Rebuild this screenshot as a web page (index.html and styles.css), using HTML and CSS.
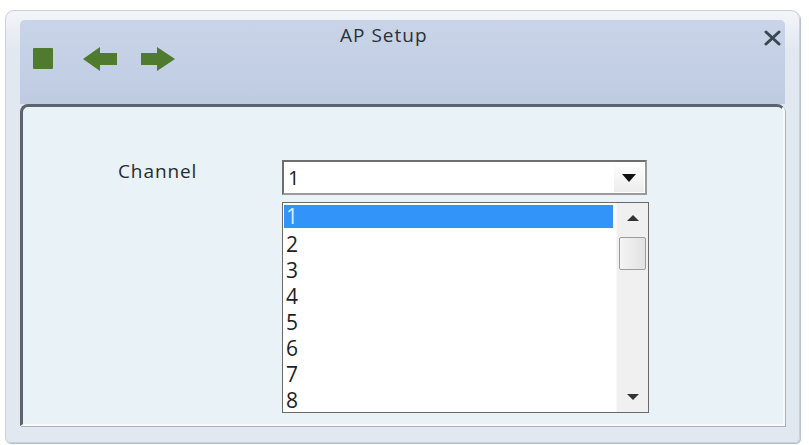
FILE: index.html
```html
<html>
  <head>
    <title>AP Setup</title>
    <link rel="stylesheet" href="styles.css">
  </head>
  <body>
    <div class="window">
      <div class="header">
        <div class="tools">
          <svg class="tool" width="20" height="21" viewBox="0 0 20 21"><rect x="0" y="0" width="20" height="21" rx="1" fill="#4f7b2f"/></svg>
          <svg class="tool" width="34" height="24" viewBox="0 0 34 24"><polygon points="0,12 17,0 17,6 34,6 34,18 17,18 17,24" fill="#4f7b2f"/></svg>
          <svg class="tool" width="34" height="24" viewBox="0 0 34 24"><polygon points="34,12 16,0 16,6 0,6 0,18 16,18 16,24" fill="#4f7b2f"/></svg>
        </div>
        <div class="title">AP Setup</div>
        <div class="close">
          <svg width="19" height="16" viewBox="0 0 19 16"><path d="M3 2 L16 14 M16 2 L3 14" stroke="#3e4550" stroke-width="3" stroke-linecap="round"/></svg>
        </div>
      </div>
      <div class="panel">
        <div class="field">
          <div class="label">Channel</div>
          <div class="picker">
            <div class="combo">
              <span class="value">1</span>
              <span class="drop"><svg width="14" height="8" viewBox="0 0 14 8"><polygon points="0,0 14,0 7,8" fill="#111"/></svg></span>
            </div>
            <div class="list">
              <ul class="options">
                <li class="selected">1</li>
                <li>2</li>
                <li>3</li>
                <li>4</li>
                <li>5</li>
                <li>6</li>
                <li>7</li>
                <li>8</li>
              </ul>
              <div class="scrollbar">
                <span class="arrow"><svg width="12" height="6" viewBox="0 0 12 6"><polygon points="0,6 12,6 6,0" fill="#333"/></svg></span>
                <span class="thumb"></span>
                <span class="track"></span>
                <span class="arrow"><svg width="12" height="6" viewBox="0 0 12 6"><polygon points="0,0 12,0 6,6" fill="#333"/></svg></span>
              </div>
            </div>
          </div>
        </div>
      </div>
    </div>
  </body>
</html>
```

FILE: styles.css
```css
body {
  margin: 0;
  background-color: #ffffff;
  font-family: "Open Sans", "Noto Sans", sans-serif;
  color: #2b2f36;
}
/* outer window frame */
.window {
  width: 765px;
  height: 406px;
  margin: 10px 0 0 5px;
  padding: 9px 14px 16px 14px;
  border: 1px solid #c9d0d9;
  border-radius: 9px 9px 5px 5px;
  background: linear-gradient(#f3f5f9, #e2e8f0 40px, #e2e8f0);
  box-shadow: 1px 1px 1px #b5bcc6;
  display: flex;
  flex-direction: column;
}
.header {
  height: 84px;
  display: flex;
  align-items: flex-start;
  padding: 0 3px 0 13px;
  background: linear-gradient(#c9d4e8, #c3cfe4 60%, #bfcbe0);
  border-radius: 5px 5px 0 0;
}
.tools {
  display: flex;
  gap: 30px;
  margin-top: 27px;
}
.tools .tool:first-child {
  margin-top: 1px;
}
.tools .tool:nth-child(3) {
  margin-left: -6px;
}
.title {
  flex: 1;
  margin-left: 165px;
  margin-top: 2px;
  font-size: 19px;
  letter-spacing: 1px;
  color: #2c3038;
}
.close {
  margin-top: 10px;
}
/* inner panel */
.panel {
  flex: 1;
  padding: 53px 0 0 95px;
  border-top: 3px solid #5b636f;
  border-left: 3px solid #5b636f;
  border-right: 2px solid #f7f9fb;
  border-bottom: 2px solid #f7f9fb;
  border-radius: 8px 8px 0 0;
  background-color: #e9f2f7;
  box-shadow: 1px 1px 0 #a9b1bb;
}
.field {
  display: flex;
  align-items: flex-start;
}
.label {
  width: 164px;
  margin-top: -2px;
  font-size: 19px;
  letter-spacing: 0.9px;
  color: #272b31;
}
.picker {
  display: flex;
  flex-direction: column;
  gap: 7px;
}
.combo {
  width: 361px;
  height: 31px;
  display: flex;
  align-items: center;
  background-color: #ffffff;
  border: 2px solid #6e6e6e;
  border-right-color: #9a9a9a;
  border-bottom-color: #9a9a9a;
}
.value {
  flex: 1;
  padding-left: 4px;
  font-size: 20px;
  color: #1e1e1e;
}
.drop {
  width: 30px;
  height: 29px;
  margin-right: 1px;
  display: flex;
  align-items: center;
  justify-content: center;
  background: linear-gradient(#ffffff, #ececec);
}
.list {
  width: 365px;
  height: 209px;
  display: flex;
  border: 1px solid #6a6a6a;
  background-color: #ffffff;
}
.options {
  flex: 1;
  margin: 0;
  padding: 2px 3px 0 1px;
  list-style: none;
}
.options li {
  height: 26px;
  line-height: 26px;
  padding-left: 2px;
  font-size: 21px;
  color: #1e1e1e;
}
.options li.selected {
  height: 23px;
  line-height: 23px;
  margin-bottom: 3px;
  background-color: #3294f8;
  color: #d8ecff;
}
.scrollbar {
  width: 31px;
  display: flex;
  flex-direction: column;
  align-items: center;
  background-color: #f0f0f0;
  border-left: 1px solid #f7f7f7;
}
.arrow {
  height: 30px;
  display: flex;
  align-items: center;
  justify-content: center;
}
.thumb {
  width: 25px;
  height: 31px;
  margin-top: 4px;
  border: 1px solid #9c9c9c;
  border-radius: 2px;
  background: linear-gradient(90deg, #f4f4f4, #e2e2e2);
}
.track {
  flex: 1;
}
```
